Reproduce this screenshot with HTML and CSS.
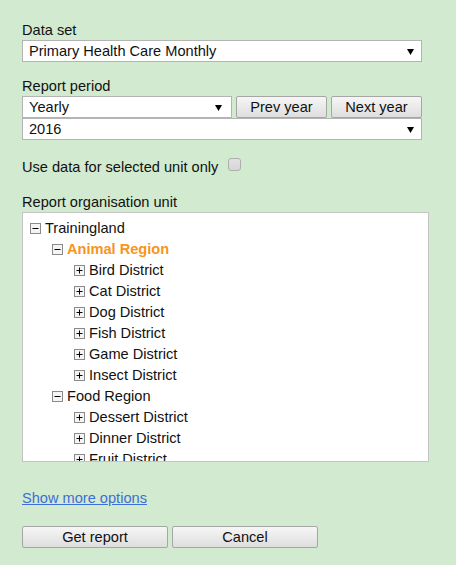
FILE: index.html
```html
<!DOCTYPE html>
<html lang="en">
<head>
<meta charset="utf-8">
<title>Data set report</title>
<link rel="stylesheet" href="styles.css">
</head>
<body>
<div class="page">
  <div class="group">
    <div class="label">Data set</div>
    <div class="select"><span>Primary Health Care Monthly</span><svg class="arrow" width="7" height="6" viewBox="0 0 7 6"><path d="M0 0H7L3.5 6Z"/></svg></div>
  </div>

  <div class="group">
    <div class="label">Report period</div>
    <div class="period-row">
      <div class="select"><span>Yearly</span><svg class="arrow" width="7" height="6" viewBox="0 0 7 6"><path d="M0 0H7L3.5 6Z"/></svg></div>
      <button class="btn">Prev year</button>
      <button class="btn">Next year</button>
    </div>
    <div class="select"><span>2016</span><svg class="arrow" width="7" height="6" viewBox="0 0 7 6"><path d="M0 0H7L3.5 6Z"/></svg></div>
  </div>

  <div class="check-row">
    <span>Use data for selected unit only</span>
    <span class="checkbox"></span>
  </div>

  <div class="group">
    <div class="label">Report organisation unit</div>
    <div class="tree">
      <div class="row lvl0"><svg class="tog" width="11" height="11" viewBox="0 0 11 11"><rect x="0.5" y="0.5" width="10" height="10"/><path d="M2.5 5.5H8.5"/></svg><span>Trainingland</span></div>
      <div class="row lvl1 selected"><svg class="tog" width="11" height="11" viewBox="0 0 11 11"><rect x="0.5" y="0.5" width="10" height="10"/><path d="M2.5 5.5H8.5"/></svg><span>Animal Region</span></div>
      <div class="row lvl2"><svg class="tog" width="11" height="11" viewBox="0 0 11 11"><rect x="0.5" y="0.5" width="10" height="10"/><path d="M2.5 5.5H8.5M5.5 2.5V8.5"/></svg><span>Bird District</span></div>
      <div class="row lvl2"><svg class="tog" width="11" height="11" viewBox="0 0 11 11"><rect x="0.5" y="0.5" width="10" height="10"/><path d="M2.5 5.5H8.5M5.5 2.5V8.5"/></svg><span>Cat District</span></div>
      <div class="row lvl2"><svg class="tog" width="11" height="11" viewBox="0 0 11 11"><rect x="0.5" y="0.5" width="10" height="10"/><path d="M2.5 5.5H8.5M5.5 2.5V8.5"/></svg><span>Dog District</span></div>
      <div class="row lvl2"><svg class="tog" width="11" height="11" viewBox="0 0 11 11"><rect x="0.5" y="0.5" width="10" height="10"/><path d="M2.5 5.5H8.5M5.5 2.5V8.5"/></svg><span>Fish District</span></div>
      <div class="row lvl2"><svg class="tog" width="11" height="11" viewBox="0 0 11 11"><rect x="0.5" y="0.5" width="10" height="10"/><path d="M2.5 5.5H8.5M5.5 2.5V8.5"/></svg><span>Game District</span></div>
      <div class="row lvl2"><svg class="tog" width="11" height="11" viewBox="0 0 11 11"><rect x="0.5" y="0.5" width="10" height="10"/><path d="M2.5 5.5H8.5M5.5 2.5V8.5"/></svg><span>Insect District</span></div>
      <div class="row lvl1"><svg class="tog" width="11" height="11" viewBox="0 0 11 11"><rect x="0.5" y="0.5" width="10" height="10"/><path d="M2.5 5.5H8.5"/></svg><span>Food Region</span></div>
      <div class="row lvl2"><svg class="tog" width="11" height="11" viewBox="0 0 11 11"><rect x="0.5" y="0.5" width="10" height="10"/><path d="M2.5 5.5H8.5M5.5 2.5V8.5"/></svg><span>Dessert District</span></div>
      <div class="row lvl2"><svg class="tog" width="11" height="11" viewBox="0 0 11 11"><rect x="0.5" y="0.5" width="10" height="10"/><path d="M2.5 5.5H8.5M5.5 2.5V8.5"/></svg><span>Dinner District</span></div>
      <div class="row lvl2"><svg class="tog" width="11" height="11" viewBox="0 0 11 11"><rect x="0.5" y="0.5" width="10" height="10"/><path d="M2.5 5.5H8.5M5.5 2.5V8.5"/></svg><span>Fruit District</span></div>
      <div class="row lvl2"><svg class="tog" width="11" height="11" viewBox="0 0 11 11"><rect x="0.5" y="0.5" width="10" height="10"/><path d="M2.5 5.5H8.5M5.5 2.5V8.5"/></svg><span>Meat District</span></div>
      <div class="row lvl2"><svg class="tog" width="11" height="11" viewBox="0 0 11 11"><rect x="0.5" y="0.5" width="10" height="10"/><path d="M2.5 5.5H8.5M5.5 2.5V8.5"/></svg><span>Snack District</span></div>
      <div class="row lvl2"><svg class="tog" width="11" height="11" viewBox="0 0 11 11"><rect x="0.5" y="0.5" width="10" height="10"/><path d="M2.5 5.5H8.5M5.5 2.5V8.5"/></svg><span>Vegetable District</span></div>
    </div>
  </div>

  <a class="more" href="#">Show more options</a>

  <div class="actions">
    <button class="btn wide">Get report</button>
    <button class="btn wide">Cancel</button>
  </div>
</div>
</body>
</html>
```

FILE: styles.css
```css
html, body {
  margin: 0;
  padding: 0;
  background: #d2ead0;
}

body {
  font-family: "Liberation Sans", Arial, sans-serif;
  font-size: 14.6px;
  color: #111;
}

.page {
  width: 408px;
  padding: 22px 0 0 22px;
  display: flex;
  flex-direction: column;
}

.group {
  display: flex;
  flex-direction: column;
}

.group + .group {
  margin-top: 16px;
}

.label {
  line-height: 17px;
  margin-bottom: 1px;
}

.select {
  box-sizing: border-box;
  width: 400px;
  height: 22px;
  background: #fff;
  border: 1px solid #b4b4b4;
  display: flex;
  align-items: center;
  justify-content: space-between;
  padding: 0 7px 0 6px;
}

.select span {
  line-height: 20px;
}

.arrow {
  fill: #000;
  margin-top: 1px;
}

.period-row {
  display: flex;
  gap: 4px;
  width: 400px;
}

.period-row .select {
  width: 210px;
  padding-right: 9px;
}

.btn {
  box-sizing: border-box;
  height: 22px;
  width: 91px;
  margin: 0;
  padding: 0;
  font-family: inherit;
  font-size: 14.6px;
  color: #111;
  border: 1px solid #a6a6a6;
  border-radius: 2px;
  background: linear-gradient(#f6f6f6, #dedede);
  line-height: 20px;
}

.check-row {
  display: flex;
  align-items: flex-start;
  margin-top: 19px;
  line-height: 17px;
  gap: 10px;
}

.checkbox {
  box-sizing: border-box;
  width: 13px;
  height: 13px;
  margin-top: -1px;
  border: 1px solid #aeaeae;
  border-radius: 3px;
  background: linear-gradient(#e2e2e2, #d6d6d6);
}

.check-row + .group {
  margin-top: 18px;
}

.tree {
  box-sizing: border-box;
  width: 407px;
  height: 250px;
  background: #fff;
  border: 1px solid #c4c4c4;
  overflow-y: scroll;
  padding: 4px 0 3px 7px;
}

.tree::-webkit-scrollbar {
  width: 13px;
}

.tree::-webkit-scrollbar-track {
  background: #ececec;
}

.tree::-webkit-scrollbar-thumb {
  background: #bababa;
}

.row {
  display: flex;
  align-items: center;
  height: 21px;
  white-space: nowrap;
}

.row.lvl1 { padding-left: 22px; }
.row.lvl2 { padding-left: 44px; }

.tog {
  flex: none;
  margin: 2px 4px 0 0;
}

.tog rect {
  fill: #f4f4f4;
  stroke: #8a8a8a;
}

.tog path {
  stroke: #000;
  stroke-width: 1;
  fill: none;
}

.row.selected span {
  color: #f7941d;
  font-weight: bold;
}

.more {
  align-self: flex-start;
  margin-top: 28px;
  line-height: 17px;
  color: #3d6fd6;
  text-decoration: underline;
}

.actions {
  display: flex;
  gap: 4px;
  margin-top: 19px;
}

.btn.wide {
  width: 146px;
}
```
